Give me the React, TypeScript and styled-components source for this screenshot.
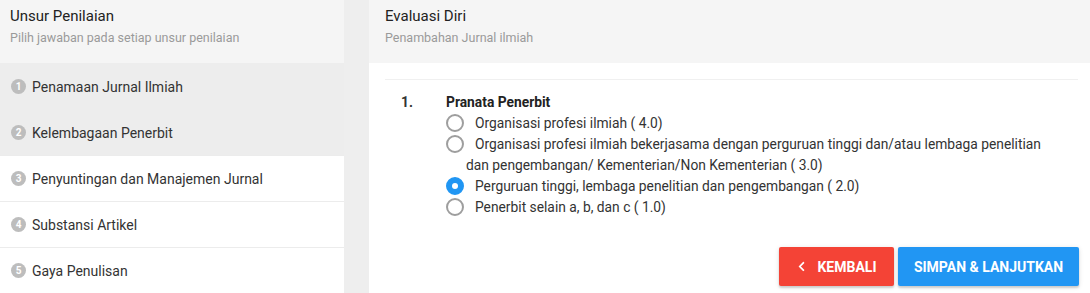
import styled, { createGlobalStyle } from "styled-components";
import { FaChevronLeft } from "react-icons/fa";

const GlobalStyle = createGlobalStyle`
  html, body {
    margin: 0;
    padding: 0;
    height: 100%;
  }
  body {
    font-family: Roboto, "Noto Sans", Arial, sans-serif;
    background: #eeeeee;
    color: #333;
  }
  #root {
    height: 100%;
  }
`;

const Page = styled.div`
  display: flex;
  gap: 25px;
  height: 100%;
  background: #eeeeee;
`;

const Sidebar = styled.aside`
  width: 344px;
  flex-shrink: 0;
  display: flex;
  flex-direction: column;
  background: #ffffff;
`;

const PanelHeader = styled.div<{ $pad: number }>`
  height: 63px;
  box-sizing: border-box;
  padding: 6px ${(p) => p.$pad}px 0;
  background: #f5f5f5;
`;

const HeaderTitle = styled.div`
  font-size: 15px;
  line-height: 20px;
  color: #222;
`;

const HeaderSub = styled.div`
  font-size: 12.5px;
  line-height: 20px;
  margin-top: 2px;
  color: #9a9a9a;
`;

const StepItem = styled.div<{ $active?: boolean }>`
  height: 46px;
  box-sizing: border-box;
  display: flex;
  align-items: center;
  padding-left: 11px;
  font-size: 14px;
  color: #333;
  background: ${(p) => (p.$active ? "#ededed" : "#ffffff")};
  border-top: 1px solid ${(p) => (p.$active ? "#ededed" : "#ececec")};
`;

const Badge = styled.span`
  width: 15px;
  height: 15px;
  border-radius: 50%;
  background: #bdbdbd;
  color: #fff;
  font-size: 10px;
  font-weight: 700;
  display: inline-flex;
  align-items: center;
  justify-content: center;
  margin-right: 6px;
`;

const Main = styled.main`
  flex: 1;
  display: flex;
  flex-direction: column;
  background: #ffffff;
`;

const Body = styled.div`
  padding: 16px 11px 0 16px;
`;

const Divider = styled.div`
  border-top: 1px solid #f0f0f0;
  margin-right: 1px;
`;

const Question = styled.div`
  display: flex;
  margin-top: 12px;
  padding: 0 30px 0 16px;
  font-size: 13.8px;
  line-height: 21px;
  color: #333;
`;

const QNumber = styled.div`
  width: 45px;
  font-weight: 700;
`;

const QContent = styled.div`
  flex: 1;
`;

const QTitle = styled.div`
  font-weight: 700;
  color: #222;
`;

const Option = styled.label`
  display: block;
  padding-left: 20px;
  cursor: pointer;
`;

const Radio = styled.span<{ $checked?: boolean }>`
  display: inline-block;
  box-sizing: border-box;
  width: 18px;
  height: 18px;
  margin-left: -20px;
  margin-right: 11px;
  vertical-align: -4px;
  border-radius: 50%;
  border: 2px solid ${(p) => (p.$checked ? "#2196f3" : "#9e9e9e")};
  background: ${(p) => (p.$checked ? "#2196f3" : "transparent")};
  position: relative;

  &::after {
    content: "";
    display: ${(p) => (p.$checked ? "block" : "none")};
    position: absolute;
    left: 4px;
    top: 4px;
    width: 6px;
    height: 6px;
    border-radius: 50%;
    background: #fff;
  }
`;

const Actions = styled.div`
  display: flex;
  justify-content: flex-end;
  gap: 4px;
  margin-top: 29px;
`;

const Button = styled.button<{ $color: string; $width: number }>`
  width: ${(p) => p.$width}px;
  height: 39px;
  border: none;
  border-radius: 2px;
  background: ${(p) => p.$color};
  color: #fff;
  font-family: Roboto, Arial, sans-serif;
  font-size: 14px;
  font-weight: 700;
  text-transform: uppercase;
  display: inline-flex;
  align-items: center;
  justify-content: center;
  gap: 10px;
  box-shadow: 0 2px 2px rgba(0, 0, 0, 0.14), 0 1px 5px rgba(0, 0, 0, 0.12);
  cursor: pointer;
`;

const steps = [
  "Penamaan Jurnal Ilmiah",
  "Kelembagaan Penerbit",
  "Penyuntingan dan Manajemen Jurnal",
  "Substansi Artikel",
  "Gaya Penulisan",
];

const options = [
  { text: "Organisasi profesi ilmiah ( 4.0)", checked: false },
  {
    text: "Organisasi profesi ilmiah bekerjasama dengan perguruan tinggi dan/atau lembaga penelitian dan pengembangan/ Kementerian/Non Kementerian ( 3.0)",
    checked: false,
  },
  { text: "Perguruan tinggi, lembaga penelitian dan pengembangan ( 2.0)", checked: true },
  { text: "Penerbit selain a, b, dan c ( 1.0)", checked: false },
];

export default function App() {
  return (
    <>
      <GlobalStyle />
      <Page>
        <Sidebar>
          <PanelHeader $pad={10}>
            <HeaderTitle>Unsur Penilaian</HeaderTitle>
            <HeaderSub>Pilih jawaban pada setiap unsur penilaian</HeaderSub>
          </PanelHeader>
          {steps.map((s, i) => (
            <StepItem key={s} $active={i < 2}>
              <Badge>{i + 1}</Badge>
              {s}
            </StepItem>
          ))}
        </Sidebar>
        <Main>
          <PanelHeader $pad={16}>
            <HeaderTitle>Evaluasi Diri</HeaderTitle>
            <HeaderSub>Penambahan Jurnal ilmiah</HeaderSub>
          </PanelHeader>
          <Body>
            <Divider />
            <Question>
              <QNumber>1.</QNumber>
              <QContent>
                <QTitle>Pranata Penerbit</QTitle>
                {options.map((o) => (
                  <Option key={o.text}>
                    <Radio $checked={o.checked} />
                    {o.text}
                  </Option>
                ))}
              </QContent>
            </Question>
            <Actions>
              <Button $color="#f44336" $width={115}>
                <FaChevronLeft size={11} />
                Kembali
              </Button>
              <Button $color="#2196f3" $width={181}>
                Simpan &amp; Lanjutkan
              </Button>
            </Actions>
          </Body>
        </Main>
      </Page>
    </>
  );
}
